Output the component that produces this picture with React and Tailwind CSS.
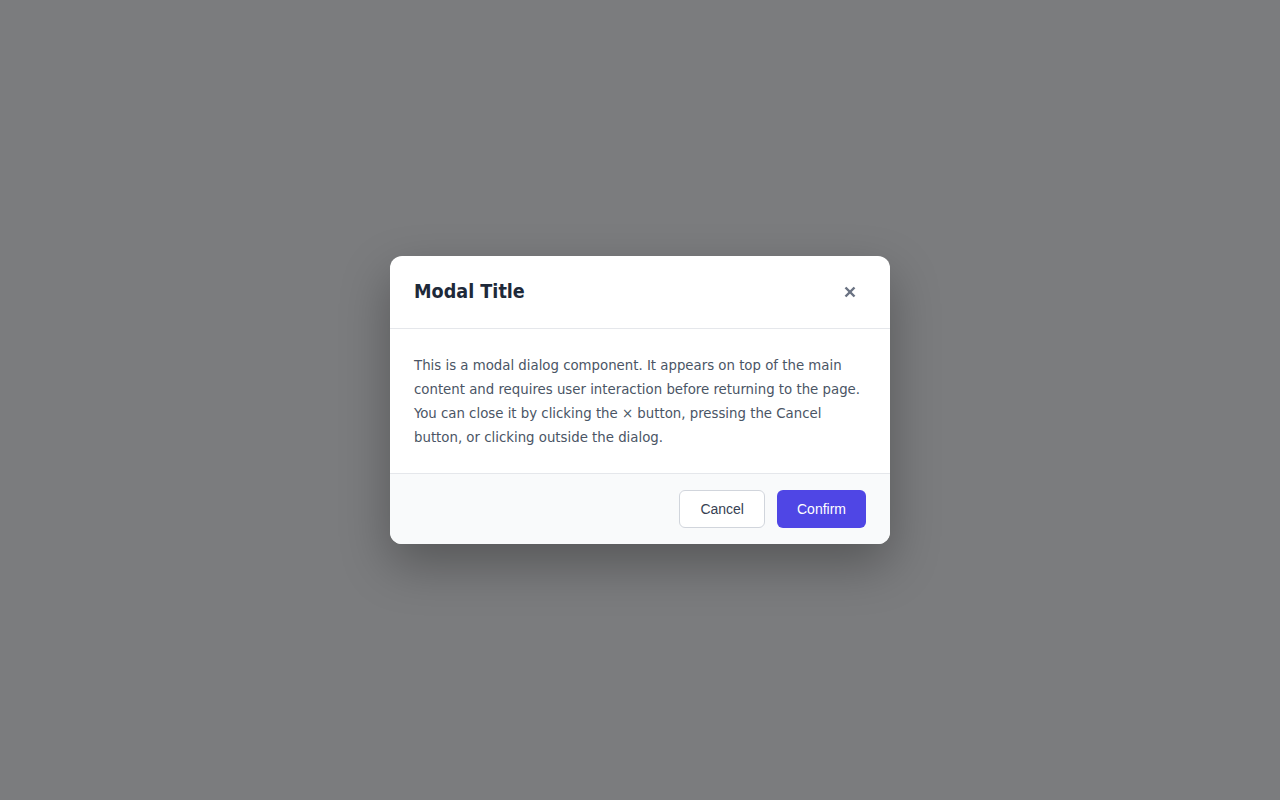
export default function App() {
	return (
		<div className="flex h-screen w-full items-center justify-center bg-[#7b7c7e] font-['DejaVu_Sans_Condensed','DejaVu_Sans',sans-serif]">
			<div className="w-[500px] overflow-hidden rounded-xl bg-white shadow-[0_20px_50px_rgba(0,0,0,0.3)]">
				{/* Header */}
				<div className="flex h-[73px] items-center justify-between border-b border-gray-200 px-6">
					<h2 className="text-[19.6px] font-bold text-gray-800">Modal Title</h2>
					<button
						type="button"
						className="flex h-8 w-8 items-center justify-center text-gray-500"
					>
						<svg
							xmlns="http://www.w3.org/2000/svg"
							viewBox="0 0 12 12"
							fill="none"
							stroke="currentColor"
							strokeWidth="2.4"
							className="h-3 w-3"
						>
							<line x1="10.5" y1="1.5" x2="1.5" y2="10.5" />
							<line x1="1.5" y1="1.5" x2="10.5" y2="10.5" />
						</svg>
					</button>
				</div>

				{/* Body */}
				<div className="px-6 py-6">
					<p className="text-[14.8px] leading-6 text-gray-600">
						This is a modal dialog component. It appears on top of the main
						content and requires user interaction before returning to the page.
						You can close it by clicking the × button, pressing the Cancel
						button, or clicking outside the dialog.
					</p>
				</div>

				{/* Footer */}
				<div className="flex justify-end gap-3 border-t border-gray-200 bg-gray-50 px-6 py-4">
					<button
						type="button"
						className="h-[38px] rounded-md border border-gray-300 bg-white px-5 font-['Liberation_Sans',Arial,sans-serif] text-sm text-gray-700"
					>
						Cancel
					</button>
					<button
						type="button"
						className="h-[38px] rounded-md bg-[#4f46e5] px-5 font-['Liberation_Sans',Arial,sans-serif] text-sm text-white"
					>
						Confirm
					</button>
				</div>
			</div>
		</div>
	);
}
